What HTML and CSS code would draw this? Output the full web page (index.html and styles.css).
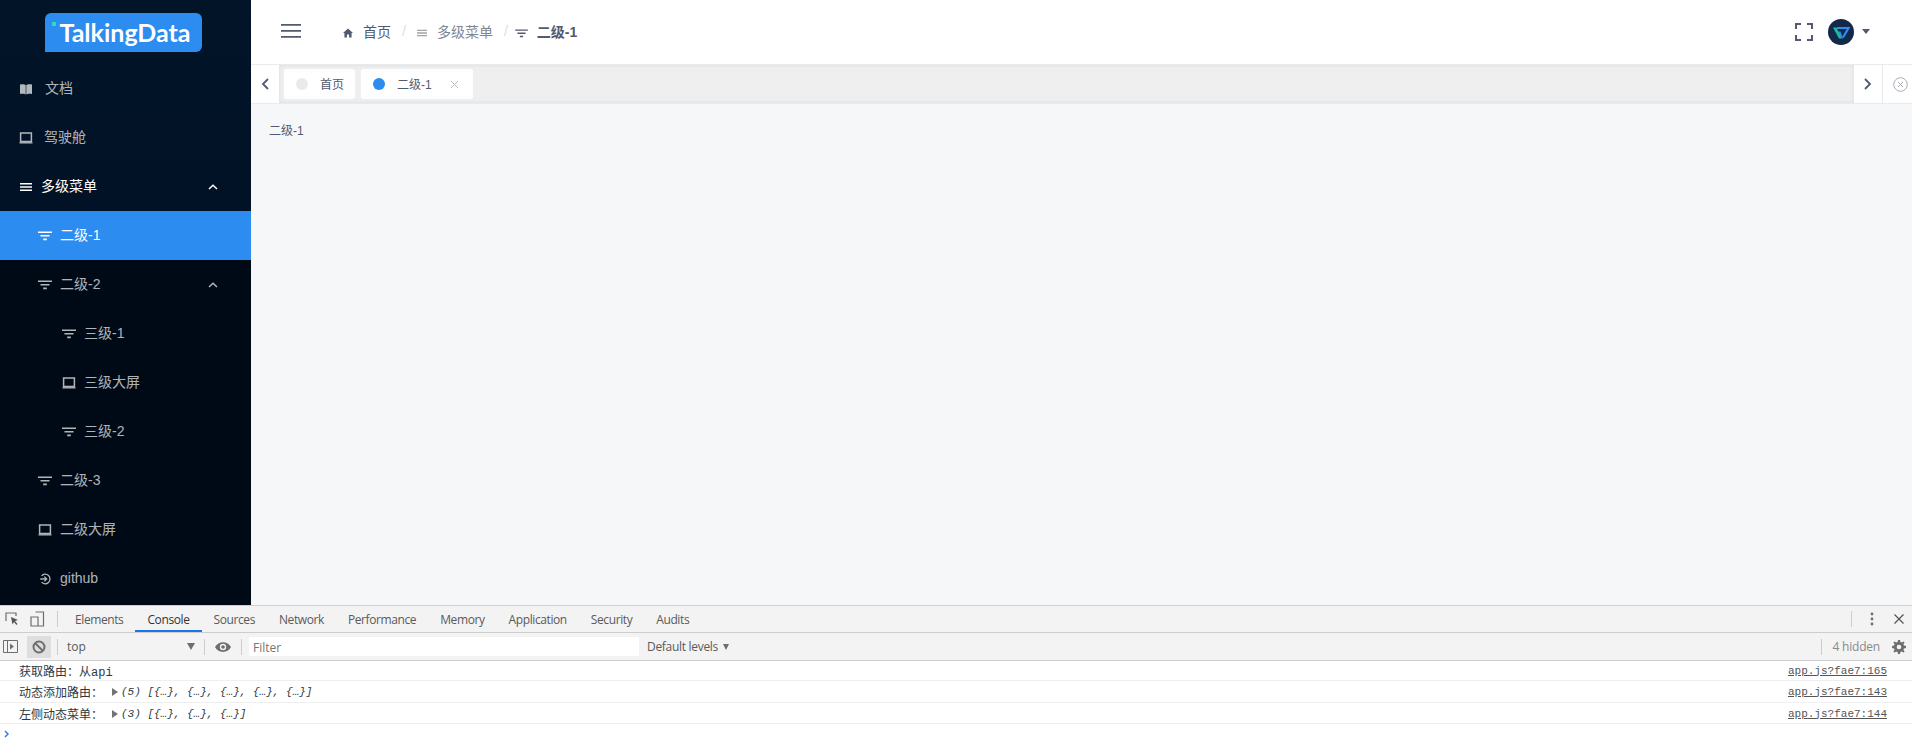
FILE: index.html
```html
<!DOCTYPE html>
<html lang="zh">
<head>
<meta charset="utf-8">
<title>二级-1</title>
<link rel="stylesheet" href="styles.css">
</head>
<body>
<svg class="defs" width="0" height="0">
  <symbol id="i-filter" viewBox="0 0 14 10"><path d="M0 0.500h14v1.500H0zM2.500 4h9v1.500h-9zM5.200 7.500h3.600v1.800H5.200z" fill="currentColor"/></symbol>
  <symbol id="i-screen" viewBox="0 0 14 12"><path d="M1.600 1h10.800v8.500H1.600z" fill="none" stroke="currentColor" stroke-width="1.500"/><path d="M0.500 10.200h13v1.300H0.500z" fill="currentColor"/></symbol>
  <symbol id="i-menu" viewBox="0 0 12 10"><path d="M0 1h12v1.600H0zM0 4.200h12v1.600H0zM0 7.400h12V9H0z" fill="currentColor"/></symbol>
  <symbol id="i-up" viewBox="0 0 10 6"><path d="M1 5l4-3.700L9 5" fill="none" stroke="currentColor" stroke-width="1.500"/></symbol>
</svg>
<div class="app">
  <aside class="sidebar">
    <div class="logo-row"><div class="logo">TalkingData</div></div>
    <nav class="menu">
      <a class="item l1"><svg class="ic" viewBox="0 0 12 12"><path d="M0 1.500C2 1 4.500 1 5.700 2v9.500C4.500 10.500 2 10.500 0 11zM12 1.500C10 1 7.500 1 6.300 2v9.500C7.500 10.500 10 10.500 12 11z" fill="currentColor"/></svg><span>文档</span></a>
      <a class="item l1"><svg class="ic box"><use href="#i-screen"/></svg><span>驾驶舱</span></a>
      <a class="item open"><svg class="ic"><use href="#i-menu"/></svg><span>多级菜单</span><svg class="chev"><use href="#i-up"/></svg></a>
      <div class="sub">
        <a class="item l2 active"><svg class="ic wide"><use href="#i-filter"/></svg><span>二级-1</span></a>
        <a class="item l2"><svg class="ic wide"><use href="#i-filter"/></svg><span>二级-2</span><svg class="chev"><use href="#i-up"/></svg></a>
        <a class="item l3"><svg class="ic wide"><use href="#i-filter"/></svg><span>三级-1</span></a>
        <a class="item l3"><svg class="ic box"><use href="#i-screen"/></svg><span>三级大屏</span></a>
        <a class="item l3"><svg class="ic wide"><use href="#i-filter"/></svg><span>三级-2</span></a>
        <a class="item l2"><svg class="ic wide"><use href="#i-filter"/></svg><span>二级-3</span></a>
        <a class="item l2"><svg class="ic box"><use href="#i-screen"/></svg><span>二级大屏</span></a>
        <a class="item l2 latin"><svg class="ic box" viewBox="0 0 14 14"><path d="M3 3.300A5.600 5.600 0 1 1 3 10.700M1.500 7h7.500M6.200 4.200L9 7 6.200 9.800" fill="none" stroke="currentColor" stroke-width="1.500"/></svg><span>github</span></a>
      </div>
    </nav>
  </aside>
  <main class="main">
    <header class="topbar">
      <svg class="burger" viewBox="0 0 20 14"><path d="M0 0h20v1.700H0zM0 6h20v1.700H0zM0 12h20v1.700H0z" fill="#515a6e"/></svg>
      <div class="crumbs">
        <svg class="crumb-ic" viewBox="0 0 12 11"><path d="M6 0L0 5.500h1.700V11h3V7.400h2.600V11h3V5.500H12z" fill="#515a6e"/></svg>
        <span class="crumb">首页</span>
        <span class="slash">/</span>
        <svg class="crumb-ic muted"><use href="#i-menu"/></svg>
        <span class="crumb muted">多级菜单</span>
        <span class="slash second">/</span>
        <svg class="crumb-ic dark wide"><use href="#i-filter"/></svg>
        <span class="crumb strong">二级-1</span>
      </div>
      <div class="top-right">
        <svg class="full" viewBox="0 0 18 18"><path d="M1 6V1h5M12 1h5v5M17 12v5h-5M6 17H1v-5" fill="none" stroke="#515a6e" stroke-width="2"/></svg>
        <svg class="avatar" viewBox="0 0 26 26"><circle cx="13" cy="13" r="13" fill="#14284a"/><path d="M9 9h11.500l-5.500 9.500" fill="none" stroke="#2d8cf0" stroke-width="2.200"/><path d="M9.500 12.500h3l2.500 7h-1.500z" fill="#2d8cf0"/><path d="M5 8.500h3.500l5 11h-2.500z" fill="#19be9b"/></svg>
        <span class="caret"></span>
      </div>
    </header>
    <div class="tabsbar">
      <button class="nav-btn"><svg viewBox="0 0 8 12"><path d="M7 1L2 6l5 5" fill="none" stroke="#515a6e" stroke-width="1.800"/></svg></button>
      <div class="tabs">
        <div class="tab first"><i class="dot"></i><span>首页</span></div>
        <div class="tab current"><i class="dot blue"></i><span>二级-1</span><svg class="x" viewBox="0 0 9 9"><path d="M1 1l7 7M8 1L1 8" stroke="#bbb" stroke-width="1"/></svg></div>
      </div>
      <button class="nav-btn next"><svg viewBox="0 0 8 12"><path d="M1 1l5 5-5 5" fill="none" stroke="#515a6e" stroke-width="1.800"/></svg></button>
      <button class="nav-btn close"><svg viewBox="0 0 15 15"><circle cx="7.500" cy="7.500" r="6.800" fill="none" stroke="#a8adb5"/><path d="M5 5l5 5M10 5l-5 5" stroke="#a8adb5"/></svg></button>
    </div>
    <section class="content">二级-1</section>
  </main>
</div>
<div class="devtools">
  <div class="dt-tabs">
    <svg class="dt-ic" viewBox="0 0 14 14"><path d="M1 9V1h10v3" fill="none" stroke="#6e6e6e" stroke-width="1.200"/><path d="M6 5l7 3-3 1 2.500 3-1 1-2.500-3-1.500 2.500z" fill="#555"/></svg>
    <svg class="dt-ic second" viewBox="0 0 15 16"><path d="M5.500 1h8v14h-8M1 6h7v9H1z" fill="none" stroke="#6e6e6e" stroke-width="1.200"/></svg>
    <i class="sep first"></i>
    <span class="dt-tab">Elements</span>
    <span class="dt-tab on">Console</span>
    <span class="dt-tab">Sources</span>
    <span class="dt-tab">Network</span>
    <span class="dt-tab">Performance</span>
    <span class="dt-tab">Memory</span>
    <span class="dt-tab">Application</span>
    <span class="dt-tab">Security</span>
    <span class="dt-tab">Audits</span>
    <div class="dt-end">
      <i class="sep"></i>
      <svg class="kebab" viewBox="0 0 4 14"><circle cx="2" cy="2" r="1.400" fill="#6e6e6e"/><circle cx="2" cy="7" r="1.400" fill="#6e6e6e"/><circle cx="2" cy="12" r="1.400" fill="#6e6e6e"/></svg>
      <svg class="dt-x" viewBox="0 0 10 10"><path d="M.5.500l9 9M9.500.500l-9 9" stroke="#555" stroke-width="1.300"/></svg>
    </div>
  </div>
  <div class="dt-tools">
    <svg class="tg" viewBox="0 0 15 13"><path d="M.5.500h14v12H.5zM4.500.500v12" fill="none" stroke="#6e6e6e"/><path d="M7 3.500l4 3-4 3z" fill="#6e6e6e"/></svg>
    <span class="block"><svg viewBox="0 0 14 14"><circle cx="7" cy="7" r="5.500" fill="none" stroke="#6e6e6e" stroke-width="2"/><path d="M3 3l8 8" stroke="#6e6e6e" stroke-width="2"/></svg></span>
    <i class="sep"></i>
    <span class="ctx">top</span>
    <span class="tri"></span>
    <i class="sep"></i>
    <svg class="eye" viewBox="0 0 16 10"><path d="M0 5c3.500-6.500 12.500-6.500 16 0-3.500 6.500-12.500 6.500-16 0z" fill="#6e6e6e"/><circle cx="8" cy="5" r="3.200" fill="#f3f3f3"/><circle cx="8" cy="5" r="1.800" fill="#6e6e6e"/></svg>
    <i class="sep"></i>
    <div class="filter">Filter</div>
    <span class="levels">Default levels</span>
    <span class="tri small"></span>
    <div class="tools-end">
      <i class="sep"></i>
      <span class="hidden-count">4 hidden</span>
      <svg class="gear" viewBox="0 0 14 14"><path d="M6 0h2l.4 2 1.400.6L11.500 1.400l1.100 1.100-1.200 1.700L12 5.600l2 .4v2l-2 .4-.6 1.400 1.200 1.700-1.100 1.100-1.700-1.200-1.400.6L8 14H6l-.4-2-1.400-.6-1.700 1.200-1.100-1.100 1.200-1.700L2 8.400 0 8V6l2-.4.6-1.400-1.200-1.700L2.500 1.400l1.700 1.200L5.600 2z" fill="#6e6e6e"/><circle cx="7" cy="7" r="2.300" fill="#f3f3f3"/></svg>
    </div>
  </div>
  <div class="logs">
    <div class="log h20"><span class="msg">获取路由：从api</span><a class="src">app.js?fae7:165</a></div>
    <div class="log h22"><span class="msg w84">动态添加路由：</span><span class="tw"></span><em>(5) [{…}, {…}, {…}, {…}, {…}]</em><a class="src">app.js?fae7:143</a></div>
    <div class="log h21"><span class="msg w84">左侧动态菜单：</span><span class="tw"></span><em>(3) [{…}, {…}, {…}]</em><a class="src">app.js?fae7:144</a></div>
    <div class="prompt"><svg viewBox="0 0 6 8"><path d="M1 1l3 3-3 3" fill="none" stroke="#3a7cf0" stroke-width="1.500"/></svg></div>
  </div>
</div>
</body>
</html>
```
FILE: styles.css
```css
* { box-sizing: border-box; }
html, body { margin: 0; height: 100%; overflow: hidden; }
body {
  width: 1912px; height: 756px;
  display: flex; flex-direction: column;
  font-family: "Liberation Sans", "Noto Sans CJK SC", sans-serif;
  font-size: 14px; color: #515a6e; background: #fff;
}
.defs { display: block; height: 0; }
svg { display: block; flex: none; }

.app { display: flex; height: 605px; flex: none; }
.sidebar {
  width: 251px; flex: none; overflow: hidden;
  background: linear-gradient(#021428 0, #011226 210px, #000a16 260px);
  color: rgba(255,255,255,.7);
}
.logo-row { height: 64px; padding: 13px 0 0 45px; }
.logo {
  position: relative;
  width: 157px; height: 39px;
  background: #2d8cf0; border-radius: 6px 6px 6px 0;
  color: #fff; font-family: Lato, sans-serif; font-weight: 700;
  font-size: 25px; line-height: 38px; text-align: center;
  padding-left: 3px;
}
.logo::before {
  content: ""; position: absolute; left: 7px; top: 9px;
  width: 4px; height: 4px; background: #24e0c0;
}
.item { display: flex; align-items: center; height: 49px; padding-left: 20px; }
.item span { white-space: nowrap; margin-bottom: 3px; }
.item.latin span { margin-bottom: 1px; }
.ic { width: 12px; height: 12px; margin-right: 13px; }
.ic.wide { width: 14px; height: 10px; margin-right: 8px; }
.ic.box { width: 14px; height: 12px; margin-right: 8px; }
.l1 .ic.box { margin-right: 11px; margin-left: -1px; }
.open { color: #fff; }
.open .ic { margin-right: 9px; height: 10px; }
.chev { width: 10px; height: 6px; margin-left: auto; margin-right: 33px; }
.l2 { padding-left: 38px; }
.l3 { padding-left: 62px; }
.active { background: #2d8cf0; color: #fff; }

.main { flex: 1; min-width: 0; display: flex; flex-direction: column; background: #f5f7f9; }
.topbar {
  height: 65px; flex: none; background: #fff; border-bottom: 1px solid #e8eaec;
  display: flex; align-items: center; padding: 0 42px 0 30px;
}
.burger { width: 20px; height: 14px; margin-top: -3px; }
.crumbs { display: flex; align-items: center; margin-left: 42px; }
.crumb-ic { width: 10px; height: 10px; margin-right: 10px; color: #515a6e; margin-top: 2px; }
.crumb-ic.muted { color: #a0a4ab; margin-right: 10px; }
.crumb-ic.wide { width: 13px; height: 9px; margin-right: 9px; }
.crumb { color: #515a6e; margin-bottom: 3px; }
.crumb.muted { color: #808695; }
.crumb.strong { font-weight: 700; }
.slash { color: #dcdee2; margin: 0 11px 3px 11px; }
.slash.second { margin: 0 7px 3px 11px; }
.top-right { margin-left: auto; display: flex; align-items: center; margin-top: -1px; }
.full { width: 18px; height: 18px; margin-right: 15px; }
.avatar { width: 26px; height: 26px; margin-right: 8px; }
.caret { width: 0; height: 0; border: 4px solid transparent; border-top: 5px solid #515a6e; border-bottom: 0; }

.tabsbar { height: 39px; flex: none; display: flex; background: #efefef; border-bottom: 1px solid #e8eaec; }
.nav-btn {
  flex: none; width: 28px; height: 38px; padding: 0; border: 0; background: #fff;
  display: flex; align-items: center; justify-content: center;
}
.nav-btn svg { width: 8px; height: 12px; }
.nav-btn.close { width: 30px; border-left: 1px solid #e8eaec; padding-left: 5px; }
.nav-btn.close svg { width: 15px; height: 15px; }
.tabs {
  flex: 1; display: flex; gap: 6px; padding: 4px 0 0 5px;
  box-shadow: inset 0 0 4px rgba(0,0,0,.08);
}
.tab {
  height: 30px; background: #fff; border-radius: 3px;
  display: flex; align-items: center; padding: 0 12px; font-size: 12px; color: #515a6e;
}
.tab span { margin-bottom: 2px; }
.tab.first { padding-right: 11px; }
.dot { width: 12px; height: 12px; border-radius: 50%; background: #e8eaec; margin-right: 12px; }
.dot.blue { background: #2d8cf0; }
.x { width: 9px; height: 9px; margin-left: 18px; margin-right: 3px; }
.tab.current { padding-right: 11px; }
.content { flex: 1; padding: 18px 18px; font-size: 12px; line-height: 18px; }

.devtools {
  flex: 1; min-height: 0; display: flex; flex-direction: column; background: #fff;
  border-top: 1px solid #cfcfcf; font-size: 12px; color: #5a5a5a;
  font-family: "Open Sans", "Noto Sans CJK SC", sans-serif;
}
.dt-tabs {
  height: 27px; flex: none; display: flex; align-items: center; background: #f3f3f3;
  border-bottom: 1px solid #cdcdcd; padding-left: 5px;
}
.dt-ic { width: 14px; height: 14px; }
.dt-ic.second { width: 15px; height: 16px; margin-left: 11px; }
.sep { display: block; flex: none; width: 1px; height: 16px; background: #cdcdcd; }
.sep.first { margin: 0 5px 0 12px; }
.dt-tab { height: 26px; line-height: 27px; padding: 0 12px; white-space: nowrap; letter-spacing: -.4px; }
.dt-tab.on { color: #333; border-bottom: 2px solid #1a73e8; }
.dt-end { margin-left: auto; display: flex; align-items: center; }
.kebab { width: 4px; height: 14px; margin: 0 20px 0 18px; }
.dt-x { width: 10px; height: 10px; margin-right: 8px; }

.dt-tools {
  height: 28px; flex: none; display: flex; align-items: center; background: #f3f3f3;
  border-bottom: 1px solid #cdcdcd; padding-left: 3px;
}
.tg { width: 15px; height: 13px; }
.block {
  width: 24px; height: 22px; margin-left: 9px; margin-right: 6px; background: #dedede;
  display: flex; align-items: center; justify-content: center;
}
.block svg { width: 14px; height: 14px; }
.ctx { width: 129px; padding-left: 9px; font-size: 12px; }
.tri { width: 0; height: 0; border: 4px solid transparent; border-top: 7px solid #6e6e6e; border-bottom: 0; margin-right: 9px; }
.eye { width: 16px; height: 10px; margin: 0 10px; }
.filter {
  width: 390px; height: 19px; margin-left: 7px; background: #fff; color: #757575;
  line-height: 21px; padding-left: 4px; font-size: 12px;
}
.levels { margin-left: 8px; letter-spacing: -.3px; white-space: nowrap; }
.tri.small { margin-left: 5px; margin-right: 0; border-width: 3.500px; border-top-width: 6px; border-bottom-width: 0; }
.tools-end { margin-left: auto; display: flex; align-items: center; }
.hidden-count { margin: 0 12px 0 10px; color: #8a8a8a; letter-spacing: -.2px; }
.gear { width: 14px; height: 14px; margin-right: 6px; }

.logs { flex: 1; font-family: "Liberation Mono", "Noto Sans CJK SC", monospace; font-size: 11px; color: #303942; }
.log { display: flex; align-items: center; padding: 0 25px 0 19px; border-bottom: 1px solid #efefef; }
.h20 { height: 20px; }
.h22 { height: 22px; }
.h21 { height: 21px; padding-top: 1px; }
.msg { font-size: 12px; }
.w84 { width: 93px; flex: none; }
.tw { width: 0; height: 0; border: 4px solid transparent; border-left: 6px solid #727272; border-right: 0; margin-right: 3px; }
.log em { font-style: italic; white-space: nowrap; }
.src { margin-left: auto; color: #545454; text-decoration: underline; }
.prompt { padding: 6px 0 0 4px; }
.prompt svg { width: 6px; height: 8px; }
```
